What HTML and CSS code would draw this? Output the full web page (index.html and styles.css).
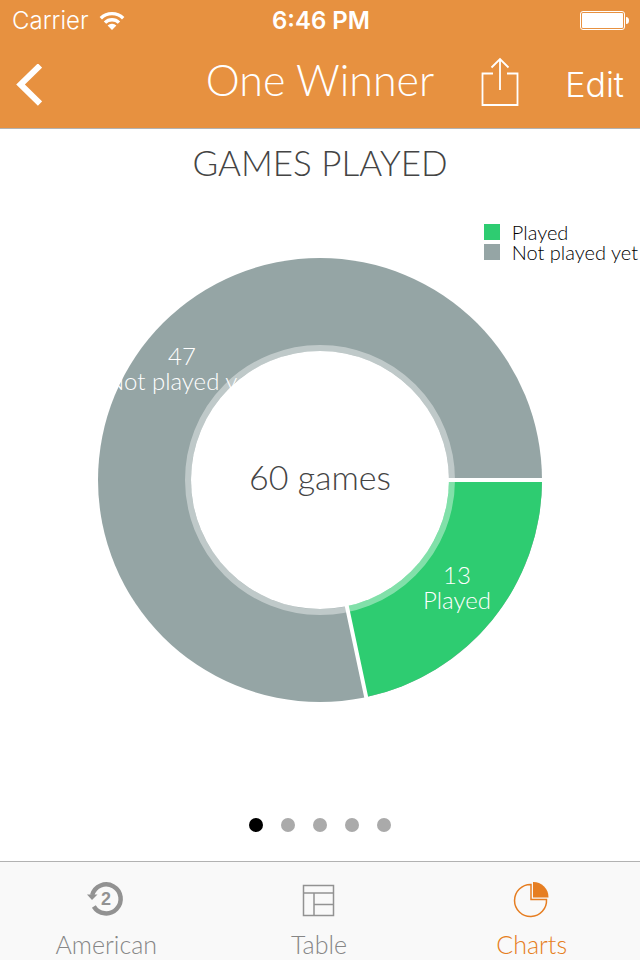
FILE: index.html
```html
<!DOCTYPE html>
<html lang="en">
<head>
<meta charset="utf-8">
<meta name="viewport" content="width=device-width, initial-scale=1">
<title>One Winner</title>
<link rel="stylesheet" href="styles.css">
</head>
<body>
<header class="header">
  <div class="status">
    <div class="carrier">
      <span>Carrier</span>
      <svg width="26" height="20" viewBox="0 0 26 20" fill="none" stroke="#fff" stroke-width="3.4" aria-hidden="true">
        <path d="M1.8 7.2a16 16 0 0 1 22.4 0"/>
        <path d="M6 11.6a10 10 0 0 1 14 0"/>
        <path d="M13 19l-4.4-4.4a6.2 6.2 0 0 1 8.8 0z" fill="#fff" stroke="none"/>
      </svg>
    </div>
    <time class="clock">6:46 PM</time>
    <svg class="battery" width="50" height="20" viewBox="0 0 50 20" aria-hidden="true">
      <rect x=".5" y=".5" width="44" height="18" rx="2.5" fill="none" stroke="#fff"/>
      <rect x="2" y="2" width="41" height="15" rx="1" fill="#fff"/>
      <path d="M46 6q3 0 3 3.500t-3 3.500z" fill="#fff"/>
    </svg>
  </div>
  <nav class="bar">
    <button class="icon-button" type="button" aria-label="Back">
      <svg width="26" height="42" viewBox="0 0 26 42" fill="none" stroke="#fff" stroke-width="6"><path d="M24 1.500L4.500 20.500l19.500 19"/></svg>
    </button>
    <h1 class="title">One Winner</h1>
    <div class="actions">
      <button class="icon-button share" type="button" aria-label="Share">
        <svg width="38" height="50" viewBox="0 0 38 50" fill="none" stroke="#fff" stroke-width="1.800">
          <path d="M12 16.500H1.500v31.500h35V16.500H26M19 33V2M10.500 10.500L19 2l8.500 8.500"/>
        </svg>
      </button>
      <button class="edit" type="button">Edit</button>
    </div>
  </nav>
</header>
<main class="page">
  <h2 class="heading">GAMES PLAYED</h2>
  <section class="chart">
    <svg class="donut" viewBox="0 0 640 480" role="img" aria-label="60 games: 13 played, 47 not played yet">
      <circle cx="320" cy="258" r="222" fill="#95a5a5"/>
      <path d="M320 258H542A222 222 0 0 1 366.200 475.100z" fill="#2ecc71"/>
      <circle cx="320" cy="258" r="132" fill="none" stroke="#fff" stroke-opacity=".4" stroke-width="6"/>
      <path d="M544 258H320L366.600 477.200" fill="none" stroke="#fff" stroke-width="4"/>
      <circle cx="320" cy="258" r="129" fill="#fff"/>
      <g class="slice-label">
        <text x="182" y="143">47</text>
        <text x="182" y="168">Not played yet</text>
        <text x="457" y="362">13</text>
        <text x="457" y="387">Played</text>
      </g>
      <text class="total" x="320" y="268">60 games</text>
    </svg>
    <ul class="legend">
      <li><i class="swatch played"></i>Played</li>
      <li><i class="swatch pending"></i>Not played yet</li>
    </ul>
  </section>
  <div class="dots" aria-label="Page 1 of 5">
    <i class="dot current"></i><i class="dot"></i><i class="dot"></i><i class="dot"></i><i class="dot"></i>
  </div>
</main>
<nav class="tabs">
  <a class="tab" href="#american">
    <svg width="38" height="38" viewBox="0 0 38 38" aria-hidden="true">
      <path d="M5.200 15A14.500 14.500 0 1 1 6.800 26.500" fill="none" stroke="#929292" stroke-width="4.500"/>
      <path d="M0 14.500h10.500l-5.500 5.500z" fill="#929292"/>
      <text class="badge" x="19" y="25">2</text>
    </svg>
    <span>American</span>
  </a>
  <a class="tab" href="#table">
    <svg width="38" height="38" viewBox="0 0 38 38" fill="none" stroke="#929292" stroke-width="1.500" aria-hidden="true">
      <path d="M3.500 5.500h30v30h-30zM3.500 13h30M14 13v22.500M14 24.500h19.500"/>
    </svg>
    <span>Table</span>
  </a>
  <a class="tab active" href="#charts" aria-current="page">
    <svg width="38" height="38" viewBox="0 0 38 38" aria-hidden="true">
      <path d="M18 4.500A16 16 0 1 0 33.500 19.500H18z" fill="none" stroke="#e67e22" stroke-width="1.500"/>
      <path d="M20 2a15 15 0 0 1 15.500 15.500H20z" fill="#e67e22"/>
    </svg>
    <span>Charts</span>
  </a>
</nav>
</body>
</html>
```
FILE: styles.css
```css
* { box-sizing: border-box; }

body {
  margin: 0;
  min-height: 100vh;
  display: flex;
  flex-direction: column;
  background: #fff;
  font-family: Lato, "Liberation Sans", sans-serif;
  font-weight: 300;
}

svg { display: block; }

button {
  padding: 0;
  border: 0;
  background: none;
  color: inherit;
  font: inherit;
}

.header {
  background: #e79140;
  color: #fff;
  border-bottom: 1px solid #b2b2b2;
}

.status {
  display: grid;
  grid-template-columns: 1fr auto 1fr;
  align-items: center;
  height: 42px;
  padding: 0 10px 0 12px;
  font: 400 24px/42px Inter, sans-serif;
}

.carrier { display: flex; align-items: center; gap: 10px; font-weight: 300; }
.clock { font-weight: 600; }
.battery { justify-self: end; }

.bar {
  display: grid;
  grid-template-columns: 1fr auto 1fr;
  align-items: center;
  height: 86px;
  padding: 0 16px;
}

.icon-button { justify-self: start; }
.share { padding-bottom: 6px; }
.title { margin: 0; font-size: 43px; line-height: 48px; font-weight: 300; padding-bottom: 10px; }
.actions { display: flex; align-items: center; justify-content: flex-end; gap: 46px; }
.edit { font: 300 34px/40px Inter, sans-serif; }

.page { flex: 1; display: flex; flex-direction: column; }

.heading {
  margin: 13px 0 0;
  text-align: center;
  color: #444;
  font-size: 35px;
  font-weight: 300;
  line-height: 40px;
}

.chart { display: grid; margin-top: 40px; }
.donut { grid-area: 1 / 1; width: 100%; height: auto; }

.legend {
  grid-area: 1 / 1;
  justify-self: end;
  align-self: start;
  margin: 0;
  padding: 0 2px 0 0;
  list-style: none;
  font-size: 20px;
  line-height: 20px;
}

.legend li { display: flex; align-items: center; gap: 12px; }
.swatch { width: 16px; height: 16px; }
.played { background: #2ecc71; }
.pending { background: #95a5a5; }

.slice-label { fill: #fff; font-size: 24px; text-anchor: middle; }
.total { fill: #444; font-size: 34px; text-anchor: middle; }

.dots { display: flex; justify-content: center; gap: 18px; margin: auto 0 29px; }
.dot { width: 14px; height: 14px; border-radius: 50%; background: #aaa; }
.current { background: #000; }

.tabs {
  display: grid;
  grid-template-columns: repeat(3, 1fr);
  height: 99px;
  padding-right: 2px;
  border-top: 1px solid #b2b2b2;
  background: #f9f9f9;
}

.tab {
  display: flex;
  flex-direction: column;
  align-items: center;
  gap: 12px;
  padding-top: 18px;
  color: #868686;
  font-size: 25px;
  line-height: 28px;
  text-decoration: none;
}

.active { color: #e67e22; }
.badge { fill: #929292; font: 700 18px "Liberation Sans", sans-serif; text-anchor: middle; }
```
